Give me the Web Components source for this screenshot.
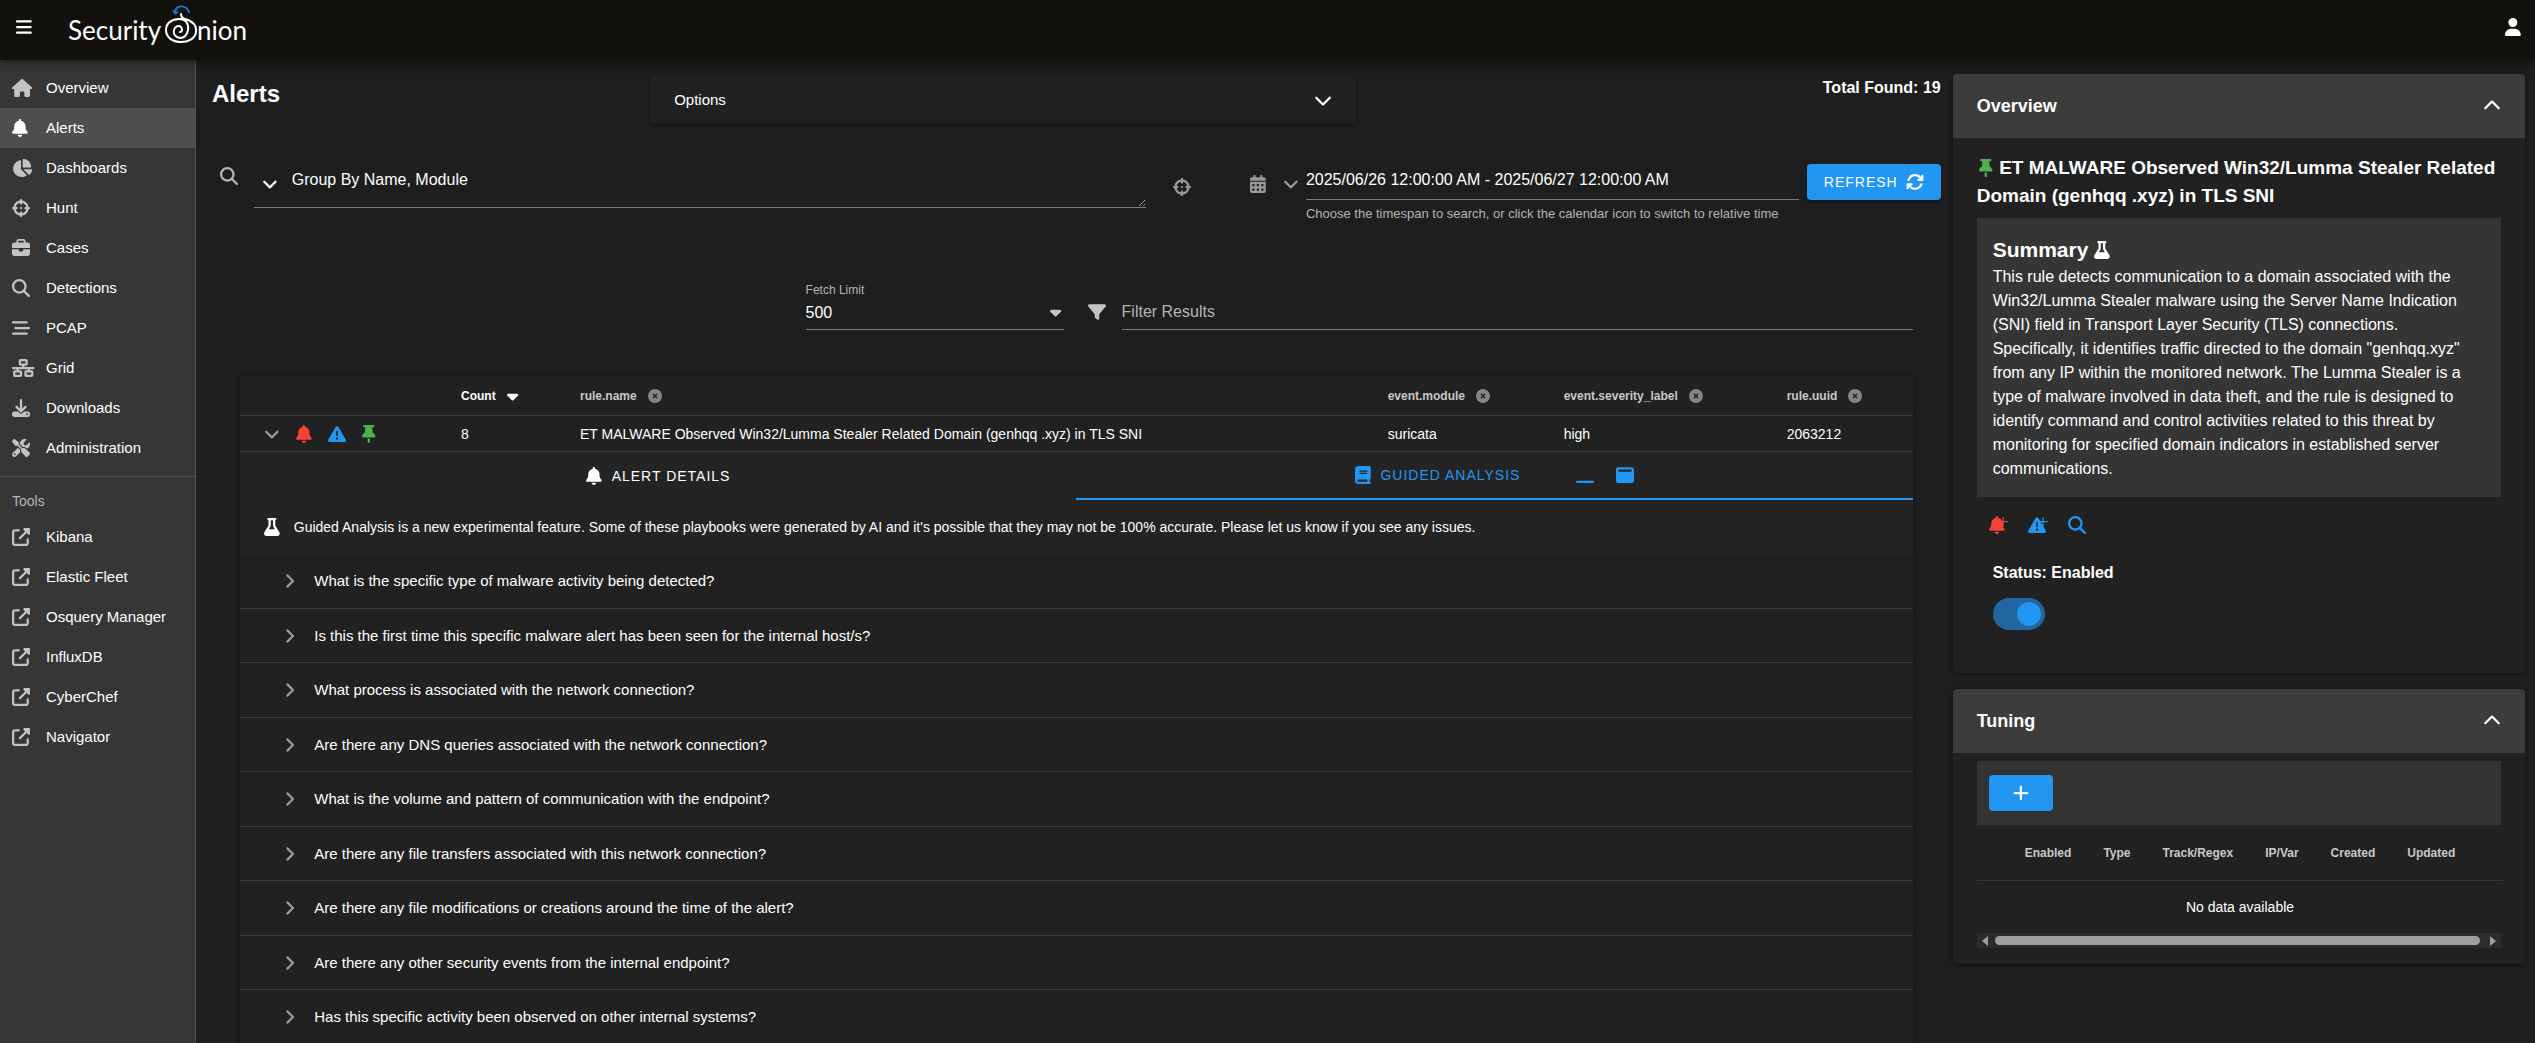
<!DOCTYPE html>
<html lang="en">
<head>
<meta charset="utf-8">
<title>Security Onion - Alerts</title>
<style>
  html, body {
    margin: 0;
    background: #1e1e1e;
  }

  body {
    font-family: "Liberation Sans", Arial, sans-serif;
    font-size: 14px;
    line-height: 20px;
    color: #fff;
    --primary: #2196f3;
    --surface: #212121;
    --raised: #353535;
    --muted: #b4b4b4;
    --rule: #7b7b7b;
    --divider: #3d3d3d;
  }
</style>
</head>
<body>
<so-app>
  <so-header slot="header"></so-header>

  <so-nav slot="nav">
    <so-nav-item icon="house">Overview</so-nav-item>
    <so-nav-item icon="bell" active>Alerts</so-nav-item>
    <so-nav-item icon="chart-pie">Dashboards</so-nav-item>
    <so-nav-item icon="crosshairs">Hunt</so-nav-item>
    <so-nav-item icon="briefcase">Cases</so-nav-item>
    <so-nav-item icon="search">Detections</so-nav-item>
    <so-nav-item icon="bars-staggered">PCAP</so-nav-item>
    <so-nav-item icon="network">Grid</so-nav-item>
    <so-nav-item icon="download">Downloads</so-nav-item>
    <so-nav-item icon="tools">Administration</so-nav-item>
    <so-nav-item slot="tools" icon="external">Kibana</so-nav-item>
    <so-nav-item slot="tools" icon="external">Elastic Fleet</so-nav-item>
    <so-nav-item slot="tools" icon="external">Osquery Manager</so-nav-item>
    <so-nav-item slot="tools" icon="external">InfluxDB</so-nav-item>
    <so-nav-item slot="tools" icon="external">CyberChef</so-nav-item>
    <so-nav-item slot="tools" icon="external">Navigator</so-nav-item>
  </so-nav>

  <so-title-bar total="19">Alerts</so-title-bar>
  <so-query-bar></so-query-bar>
  <so-filter-bar></so-filter-bar>
  <so-alert-card>
    <so-question>What is the specific type of malware activity being detected?</so-question>
    <so-question>Is this the first time this specific malware alert has been seen for the internal host/s?</so-question>
    <so-question>What process is associated with the network connection?</so-question>
    <so-question>Are there any DNS queries associated with the network connection?</so-question>
    <so-question>What is the volume and pattern of communication with the endpoint?</so-question>
    <so-question>Are there any file transfers associated with this network connection?</so-question>
    <so-question>Are there any file modifications or creations around the time of the alert?</so-question>
    <so-question>Are there any other security events from the internal endpoint?</so-question>
    <so-question>Has this specific activity been observed on other internal systems?</so-question>
  </so-alert-card>

  <so-panel slot="aside" heading="Overview"><so-overview></so-overview></so-panel>
  <so-panel slot="aside" heading="Tuning"><so-tuning></so-tuning></so-panel>
</so-app>

<script>
(() => {
  // name: [viewBox width, path], all 512 high
  const bell = 'M224 0c-17.7 0-32 14.3-32 32V51.2C119 66 64 130.6 64 208v18.8c0 47-17.3 92.4-48.5 127.6l-7.4 8.3c-8.4 9.4-10.4 22.9-5.3 34.4S19.4 416 32 416H416c12.6 0 24-7.4 29.2-18.9s3.1-25-5.3-34.4l-7.4-8.3C401.3 319.2 384 273.9 384 226.8V208c0-77.4-55-142-128-156.8V32c0-17.7-14.3-32-32-32zm45.3 493.3c12-12 18.7-28.3 18.7-45.3H224 160c0 17 6.7 33.3 18.7 45.3s28.3 18.7 45.3 18.7s33.3-6.7 45.3-18.7z'
  const triangle = 'M256 32c14.2 0 27.3 7.5 34.5 19.8l216 368c7.3 12.4 7.3 27.7 .2 40.1S486.3 480 472 480H40c-14.3 0-27.6-7.7-34.7-20.1s-7-27.8 .2-40.1l216-368C228.7 39.5 241.8 32 256 32zm0 128c-13.3 0-24 10.7-24 24V296c0 13.3 10.7 24 24 24s24-10.7 24-24V184c0-13.3-10.7-24-24-24zm32 224a32 32 0 1 0 -64 0 32 32 0 1 0 64 0z'

  const icons = {
    'bars': [448, 'M0 96C0 78.3 14.3 64 32 64H416c17.7 0 32 14.3 32 32s-14.3 32-32 32H32C14.3 128 0 113.7 0 96zM0 256c0-17.7 14.3-32 32-32H416c17.7 0 32 14.3 32 32s-14.3 32-32 32H32c-17.7 0-32-14.3-32-32zM448 416c0 17.7-14.3 32-32 32H32c-17.7 0-32-14.3-32-32s14.3-32 32-32H416c17.7 0 32 14.3 32 32z'],
    'user': [448, 'M224 256A128 128 0 1 0 224 0a128 128 0 1 0 0 256zm-45.7 48C79.8 304 0 383.8 0 482.3C0 498.7 13.3 512 29.7 512H418.3c16.4 0 29.7-13.3 29.7-29.7C448 383.8 368.2 304 269.7 304H178.3z'],
    'house': [576, 'M575.8 255.5c0 18-15 32.1-32 32.1h-32l.7 160.2c0 2.7-.2 5.4-.5 8.1V472c0 22.1-17.9 40-40 40H456c-1.1 0-2.2 0-3.3-.1c-1.4 .1-2.8 .1-4.2 .1H416 392c-22.1 0-40-17.9-40-40V448 384c0-17.7-14.3-32-32-32H256c-17.7 0-32 14.3-32 32v64 24c0 22.1-17.9 40-40 40H160 128.1c-1.5 0-3-.1-4.5-.2c-1.2 .1-2.4 .2-3.6 .2H104c-22.1 0-40-17.9-40-40V360c0-.9 0-1.9 .1-2.8V287.6H32c-18 0-32-14-32-32.1c0-9 3-17 10-24L266.4 8c7-7 15-8 22-8s15 2 21 7L564.8 231.5c8 7 12 15 11 24z'],
    'bell': [448, bell],
    'bell-plus': [448, bell + 'M384 30v114H270v32h114v114h32V176h114v-32H416V30z'],
    'chart-pie': [576, 'M304 240V16.6c0-9 7-16.6 16-16.6C443.7 0 544 100.3 544 224c0 9-7.6 16-16.6 16H304zM32 272C32 150.7 122.1 50.3 239 34.3c9.2-1.3 17 6.1 17 15.4V288L412.5 444.5c6.7 6.7 6.2 17.7-1.5 23.1C371.8 495.6 323.8 512 272 512C139.5 512 32 404.6 32 272zm526.4 16c9.3 0 16.6 7.8 15.4 17c-7.7 55.9-34.6 105.6-73.9 142.3c-6 5.6-15.4 5.2-21.2-.7L320 288H558.4z'],
    'crosshairs': [512, 'M256 0c17.7 0 32 14.3 32 32V42.4c93.7 13.9 167.7 88 181.6 181.6H480c17.7 0 32 14.3 32 32s-14.3 32-32 32H469.6c-13.9 93.7-88 167.7-181.6 181.6V480c0 17.7-14.3 32-32 32s-32-14.3-32-32V469.6C130.3 455.7 56.3 381.7 42.4 288H32c-17.7 0-32-14.3-32-32s14.3-32 32-32H42.4C56.3 130.3 130.3 56.3 224 42.4V32c0-17.7 14.3-32 32-32zM107.4 288c12.5 58.3 58.4 104.1 116.6 116.6V384c0-17.7 14.3-32 32-32s32 14.3 32 32v20.6c58.3-12.5 104.1-58.4 116.6-116.6H384c-17.7 0-32-14.3-32-32s14.3-32 32-32h20.6C392.1 165.7 346.3 119.9 288 107.4V128c0 17.7-14.3 32-32 32s-32-14.3-32-32V107.4C165.7 119.9 119.9 165.7 107.4 224H128c17.7 0 32 14.3 32 32s-14.3 32-32 32H107.4zM256 224a32 32 0 1 1 0 64 32 32 0 1 1 0-64z'],
    'briefcase': [512, 'M184 48H328c4.4 0 8 3.6 8 8V96H176V56c0-4.4 3.6-8 8-8zm-56 8V96H64C28.7 96 0 124.7 0 160v96H192 320 512V160c0-35.3-28.7-64-64-64H384V56c0-30.9-25.1-56-56-56H184c-30.9 0-56 25.1-56 56zM512 288H320v32c0 17.7-14.3 32-32 32H224c-17.7 0-32-14.3-32-32V288H0V416c0 35.3 28.7 64 64 64H448c35.3 0 64-28.7 64-64V288z'],
    'search': [512, 'M416 208c0 45.9-14.9 88.3-40 122.7L502.6 457.4c12.5 12.5 12.5 32.8 0 45.3s-32.8 12.5-45.3 0L330.7 376c-34.4 25.2-76.8 40-122.7 40C93.1 416 0 322.9 0 208S93.1 0 208 0S416 93.1 416 208zM208 352a144 144 0 1 0 0-288 144 144 0 1 0 0 288z'],
    'bars-staggered': [512, 'M0 96C0 78.3 14.3 64 32 64H416c17.7 0 32 14.3 32 32s-14.3 32-32 32H32C14.3 128 0 113.7 0 96zM64 256c0-17.7 14.3-32 32-32H480c17.7 0 32 14.3 32 32s-14.3 32-32 32H96c-17.7 0-32-14.3-32-32zM448 416c0 17.7-14.3 32-32 32H32c-17.7 0-32-14.3-32-32s14.3-32 32-32H416c17.7 0 32 14.3 32 32z'],
    'network': [640, 'M256 64H384v64H256V64zM240 0c-26.5 0-48 21.5-48 48v96c0 26.5 21.5 48 48 48h48v32H32c-17.7 0-32 14.3-32 32s14.3 32 32 32h96v32H80c-26.5 0-48 21.5-48 48v96c0 26.5 21.5 48 48 48H240c26.5 0 48-21.5 48-48V368c0-26.5-21.5-48-48-48H192V288H448v32H400c-26.5 0-48 21.5-48 48v96c0 26.5 21.5 48 48 48H560c26.5 0 48-21.5 48-48V368c0-26.5-21.5-48-48-48H512V288h96c17.7 0 32-14.3 32-32s-14.3-32-32-32H352V192h48c26.5 0 48-21.5 48-48V48c0-26.5-21.5-48-48-48H240zM96 448V384H224v64H96zm320-64H544v64H416V384z'],
    'download': [512, 'M288 32c0-17.7-14.3-32-32-32s-32 14.3-32 32V274.7l-73.4-73.4c-12.5-12.5-32.8-12.5-45.3 0s-12.5 32.8 0 45.3l128 128c12.5 12.5 32.8 12.5 45.3 0l128-128c12.5-12.5 12.5-32.8 0-45.3s-32.8-12.5-45.3 0L288 274.7V32zM64 352c-35.3 0-64 28.7-64 64v32c0 35.3 28.7 64 64 64H448c35.3 0 64-28.7 64-64V416c0-35.3-28.7-64-64-64H346.5l-45.3 45.3c-25 25-65.5 25-90.5 0L165.5 352H64zm368 56a24 24 0 1 1 0 48 24 24 0 1 1 0-48z'],
    'tools': [512, 'M78.6 5C69.1-2.4 55.6-1.5 47 7L7 47c-8.5 8.5-9.4 22-2.1 31.6l80 104c4.5 5.9 11.6 9.4 19 9.4h54.1l109 109c-14.7 29-10 65.4 14.3 89.6l112 112c12.5 12.5 32.8 12.5 45.3 0l64-64c12.5-12.5 12.5-32.8 0-45.3l-112-112c-24.2-24.2-60.6-29-89.6-14.3l-109-109V104c0-7.5-3.5-14.5-9.4-19L78.6 5zM19.9 396.1C7.2 408.8 0 426.1 0 444.1C0 481.6 30.4 512 67.9 512c18 0 35.3-7.2 48-19.9L233.7 374.3c-7.8-20.9-9-43.6-3.6-65.1l-61.7-61.7L19.9 396.1zM512 144c0-10.5-1.1-20.7-3.2-30.5c-2.4-11.2-16.1-14.1-24.2-6l-63.9 63.9c-3 3-7.1 4.7-11.3 4.7H352c-8.8 0-16-7.2-16-16V102.6c0-4.2 1.7-8.3 4.7-11.3l63.9-63.9c8.1-8.1 5.2-21.8-6-24.2C388.7 1.1 378.5 0 368 0C288.5 0 224 64.5 224 144l0 .8 85.3 85.3c36-9.1 75.8 .5 104 28.7L429 274.5c49-23 83-72.8 83-130.5zM56 432a24 24 0 1 1 48 0 24 24 0 1 1 -48 0z'],
    'external': [512, 'M352 0c-12.9 0-24.6 7.8-29.6 19.8s-2.2 25.7 6.9 34.9L370.7 96 201.4 265.4c-12.5 12.5-12.5 32.8 0 45.3s32.8 12.5 45.3 0L416 141.3l41.4 41.4c9.2 9.2 22.9 11.9 34.9 6.9s19.8-16.6 19.8-29.6V32c0-17.7-14.3-32-32-32H352zM80 32C35.8 32 0 67.8 0 112V432c0 44.2 35.8 80 80 80H400c44.2 0 80-35.8 80-80V320c0-17.7-14.3-32-32-32s-32 14.3-32 32V432c0 8.8-7.2 16-16 16H80c-8.8 0-16-7.2-16-16V112c0-8.8 7.2-16 16-16H192c17.7 0 32-14.3 32-32s-14.3-32-32-32H80z'],
    'calendar': [448, 'M128 0c17.7 0 32 14.3 32 32V64H288V32c0-17.7 14.3-32 32-32s32 14.3 32 32V64h48c26.5 0 48 21.5 48 48v48H0V112C0 85.5 21.5 64 48 64H96V32c0-17.7 14.3-32 32-32zM0 192H448V464c0 26.5-21.5 48-48 48H48c-26.5 0-48-21.5-48-48V192zm64 80v32c0 8.8 7.2 16 16 16h32c8.8 0 16-7.2 16-16V272c0-8.8-7.2-16-16-16H80c-8.8 0-16 7.2-16 16zm128 0v32c0 8.8 7.2 16 16 16h32c8.8 0 16-7.2 16-16V272c0-8.8-7.2-16-16-16H208c-8.8 0-16 7.2-16 16zm144-16c-8.8 0-16 7.2-16 16v32c0 8.8 7.2 16 16 16h32c8.8 0 16-7.2 16-16V272c0-8.8-7.2-16-16-16H336zM64 400v32c0 8.8 7.2 16 16 16h32c8.8 0 16-7.2 16-16V400c0-8.8-7.2-16-16-16H80c-8.8 0-16 7.2-16 16zm144-16c-8.8 0-16 7.2-16 16v32c0 8.8 7.2 16 16 16h32c8.8 0 16-7.2 16-16V400c0-8.8-7.2-16-16-16H208zm112 16v32c0 8.8 7.2 16 16 16h32c8.8 0 16-7.2 16-16V400c0-8.8-7.2-16-16-16H336c-8.8 0-16 7.2-16 16z'],
    'chevron-down': [512, 'M233.4 406.6c12.5 12.5 32.8 12.5 45.3 0l192-192c12.5-12.5 12.5-32.8 0-45.3s-32.8-12.5-45.3 0L256 338.7 86.6 169.4c-12.5-12.5-32.8-12.5-45.3 0s-12.5 32.8 0 45.3l192 192z'],
    'chevron-up': [512, 'M233.4 105.4c12.5-12.5 32.8-12.5 45.3 0l192 192c12.5 12.5 12.5 32.8 0 45.3s-32.8 12.5-45.3 0L256 173.3 86.6 342.6c-12.5 12.5-32.8 12.5-45.3 0s-12.5-32.8 0-45.3l192-192z'],
    'angle-down': [448, 'M201.4 374.6c12.5 12.5 32.8 12.5 45.3 0l160-160c12.5-12.5 12.5-32.8 0-45.3s-32.8-12.5-45.3 0L224 306.7 86.6 169.4c-12.5-12.5-32.8-12.5-45.3 0s-12.5 32.8 0 45.3l160 160z'],
    'angle-right': [320, 'M278.6 233.4c12.5 12.5 12.5 32.8 0 45.3l-160 160c-12.5 12.5-32.8 12.5-45.3 0s-12.5-32.8 0-45.3L210.7 256 73.4 118.6c-12.5-12.5-12.5-32.8 0-45.3s32.8-12.5 45.3 0l160 160z'],
    'caret-down': [320, 'M137.4 374.6c12.5 12.5 32.8 12.5 45.3 0l128-128c9.2-9.2 11.9-22.9 6.9-34.9s-16.6-19.8-29.6-19.8L32 192c-12.9 0-24.6 7.8-29.6 19.8s-2.2 25.7 6.9 34.9l128 128z'],
    'filter': [512, 'M3.9 54.9C10.5 40.9 24.5 32 40 32H472c15.5 0 29.5 8.9 36.1 22.9s4.6 30.5-5.2 42.5L320 320.9V448c0 12.1-6.8 23.2-17.7 28.6s-23.8 4.3-33.5-3l-64-48c-8.1-6-12.8-15.5-12.8-25.6V320.9L9 97.3C-.7 85.4-2.8 68.8 3.9 54.9z'],
    'refresh': [512, 'M105.1 202.6c7.7-21.8 20.2-42.3 37.8-59.8c62.5-62.5 163.8-62.5 226.3 0L386.3 160H352c-17.7 0-32 14.3-32 32s14.3 32 32 32H463.5h.4c17.7 0 32-14.3 32-32V80c0-17.7-14.3-32-32-32s-32 14.3-32 32v35.2L414.4 97.6c-87.5-87.5-229.3-87.5-316.8 0C73.2 122 55.6 150.7 44.8 181.4c-5.9 16.7 2.9 34.9 19.5 40.8s34.9-2.9 40.8-19.5zM39 289.3c-5 1.5-9.8 4.2-13.7 8.2c-4 4-6.7 8.8-8.1 14c-.3 1.2-.6 2.5-.8 3.8c-.3 1.7-.4 3.4-.4 5.1V432c0 17.7 14.3 32 32 32s32-14.3 32-32V396.9l17.6 17.5c87.5 87.4 229.3 87.4 316.7 0c24.4-24.4 42.1-53.1 52.9-83.7c5.9-16.7-2.9-34.9-19.5-40.8s-34.9 2.9-40.8 19.5c-7.7 21.8-20.2 42.3-37.8 59.8c-62.5 62.5-163.8 62.5-226.3 0l-.1-.1L125.6 352H160c17.7 0 32-14.3 32-32s-14.3-32-32-32H48.4c-1.6 0-3.2 .1-4.8 .3s-3.1 .5-4.6 1z'],
    'warning': [512, triangle],
    'warning-plus': [512, triangle + 'M414 30h32v114h114v32H446v114h-32V176H300v-32h114z'],
    'thumbtack': [384, 'M32 32C32 14.3 46.3 0 64 0H320c17.7 0 32 14.3 32 32s-14.3 32-32 32H290.5l11.4 148.2c36.7 19.9 65.7 53.2 79.5 94.7l1 3c3.3 9.8 1.6 20.5-4.4 28.8s-15.7 13.3-26 13.3H32c-10.3 0-19.9-4.9-26-13.3s-7.7-19.1-4.4-28.8l1-3c13.8-41.5 42.8-74.8 79.5-94.7L93.5 64H64C46.3 64 32 49.7 32 32zM160 384h64v96c0 17.7-14.3 32-32 32s-32-14.3-32-32V384z'],
    'flask': [448, 'M288 0H160 128C110.3 0 96 14.3 96 32s14.3 32 32 32V196.8c0 11.8-3.3 23.5-9.5 33.5L10.3 406.2C3.6 417.2 0 429.7 0 442.6C0 480.9 31.1 512 69.4 512H378.6c38.3 0 69.4-31.1 69.4-69.4c0-12.8-3.6-25.4-10.3-36.4L329.5 230.4c-6.2-10.1-9.5-21.7-9.5-33.5V64c17.7 0 32-14.3 32-32s-14.3-32-32-32H288zM192 196.8V64h64V196.8c0 23.7 6.6 46.9 19 67.1L309.5 320h-171L173 263.9c12.4-20.2 19-43.4 19-67.1z'],
    'book': [448, 'M96 0C43 0 0 43 0 96V416c0 53 43 96 96 96H384h32c17.7 0 32-14.3 32-32s-14.3-32-32-32V384c17.7 0 32-14.3 32-32V32c0-17.7-14.3-32-32-32H384 96zm0 384H352v64H96c-17.7 0-32-14.3-32-32s14.3-32 32-32zm32-240c0-8.8 7.2-16 16-16H336c8.8 0 16 7.2 16 16s-7.2 16-16 16H144c-8.8 0-16-7.2-16-16zm16 48H336c8.8 0 16 7.2 16 16s-7.2 16-16 16H144c-8.8 0-16-7.2-16-16s7.2-16 16-16z'],
    'minimize': [512, 'M32 416c-17.7 0-32 14.3-32 32s14.3 32 32 32H480c17.7 0 32-14.3 32-32s-14.3-32-32-32H32z'],
    'maximize': [512, 'M64 32C28.7 32 0 60.7 0 96V416c0 35.3 28.7 64 64 64H448c35.3 0 64-28.7 64-64V96c0-35.3-28.7-64-64-64H64zM96 96H416c17.7 0 32 14.3 32 32s-14.3 32-32 32H96c-17.7 0-32-14.3-32-32s14.3-32 32-32z'],
    'circle-xmark': [512, 'M256 512A256 256 0 1 0 256 0a256 256 0 1 0 0 512zM175 175c9.4-9.4 24.6-9.4 33.9 0l47 47 47-47c9.4-9.4 24.6-9.4 33.9 0s9.4 24.6 0 33.9l-47 47 47 47c9.4 9.4 9.4 24.6 0 33.9s-24.6 9.4-33.9 0l-47-47-47 47c-9.4 9.4-24.6 9.4-33.9 0s-9.4-24.6 0-33.9l47-47-47-47c-9.4-9.4-9.4-24.6 0-33.9z'],
    'plus': [448, 'M256 80c0-17.7-14.3-32-32-32s-32 14.3-32 32V224H48c-17.7 0-32 14.3-32 32s14.3 32 32 32H192V432c0 17.7 14.3 32 32 32s32-14.3 32-32V288H400c17.7 0 32-14.3 32-32s-14.3-32-32-32H256V80z']
  }

  const reset = `
    :host, * { box-sizing: border-box; }
    button, input, select, textarea {
      margin: 0;
      padding: 0;
      border: 0;
      border-radius: 0;
      outline: 0;
      background: none;
      font: inherit;
      color: inherit;
    }
    button { cursor: pointer; }
  `

  function define(name, html, connected) {
    const template = document.createElement('template')
    template.innerHTML = `<style>${reset}</style>${html}`

    customElements.define(name, class extends HTMLElement {
      constructor() {
        super()
        this.attachShadow({ mode: 'open' })
        this.shadowRoot.appendChild(template.content.cloneNode(true))
      }

      connectedCallback() {
        if (connected) connected(this, this.shadowRoot)
      }
    })
  }

  define('so-icon', `
    <style>
      :host { display: inline-flex; flex: none; font-size: 18px; }
      svg { display: block; height: 1em; fill: currentColor; overflow: visible; }
    </style>
    <svg aria-hidden="true"><path></path></svg>
  `, (host, root) => {
    const [width, path] = icons[host.getAttribute('name')]
    root.querySelector('svg').setAttribute('viewBox', `0 0 ${width} 512`)
    root.querySelector('path').setAttribute('d', path)
  })

  define('so-app', `
    <style>
      :host { display: flex; flex-direction: column; min-height: 100vh; }
      .body { display: flex; flex: 1; }
      .content {
        flex: 1;
        min-width: 0;
        display: grid;
        grid-template-columns: minmax(0, 49fr) minmax(0, 16fr);
        padding: 0 10px 0 4px;
      }
      main { padding-top: 16px; }
      aside { display: flex; flex-direction: column; gap: 16px; padding-top: 14px; }
    </style>
    <slot name="header"></slot>
    <div class="body">
      <slot name="nav"></slot>
      <div class="content">
        <main><slot></slot></main>
        <aside><slot name="aside"></slot></aside>
      </div>
    </div>
  `)

  define('so-header', `
    <style>
      :host { display: block; position: relative; z-index: 1; }
      header {
        display: flex;
        align-items: center;
        height: 60px;
        padding: 0 14px 6px 16px;
        background: #12110d;
        box-shadow: 0 2px 4px rgba(0, 0, 0, .2), 0 4px 10px rgba(0, 0, 0, .3);
      }
      button { display: flex; }
      .logo { display: block; margin: 0 auto 0 36px; }
    </style>
    <header>
      <button aria-label="Menu"><so-icon name="bars"></so-icon></button>
      <a class="logo" href="#" aria-label="Security Onion home">
        <svg width="182" height="44" viewBox="0 0 182 44" fill="none" stroke-linecap="round">
          <g fill="#fff" font-family="Lato, 'Noto Sans', sans-serif" font-size="26">
            <text x="0" y="37">Security</text>
            <text x="129" y="37">nion</text>
          </g>
          <path stroke="#fff" stroke-width="2" d="M113 11c0 3 1 4 4 5C124 18 129 22 128 29C127 36 120 39 113 39C104 39 98 34 98 27C98 20 104 16 111 16C118 16 121 21 120 27C119 32 116 35 112 35C107 34 105 31 106 27C107 23 111 22 113 24C115 27 114 29 112 29"/>
          <path stroke="#1b74cc" stroke-width="2" d="M121 9C118 2 109 1 107 9"/>
          <path fill="#1b74cc" d="M104 7l7 2-4 3z"/>
        </svg>
      </a>
      <button aria-label="User"><so-icon name="user"></so-icon></button>
    </header>
  `)

  define('so-nav', `
    <style>
      :host { display: block; flex: none; width: 196px; background: #363636; border-right: 1px solid #545454; }
      nav { padding: 8px 0; }
      hr { margin: 0; border: 0; border-top: 1px solid #545454; }
      h2 { margin: 0; padding: 0 12px; font-size: 14px; font-weight: normal; line-height: 32px; color: var(--muted); }
    </style>
    <nav><slot></slot></nav>
    <hr>
    <nav><h2>Tools</h2><slot name="tools"></slot></nav>
  `)

  define('so-nav-item', `
    <style>
      :host { display: block; }
      a {
        display: grid;
        grid-template-columns: 34px 1fr;
        align-items: center;
        height: 40px;
        padding-left: 12px;
        font-size: 15px;
        color: #fff;
        text-decoration: none;
      }
      so-icon { color: #c3c3c3; }
      :host([active]) a { background: #4e4e4e; }
      :host([active]) so-icon { color: #fff; }
    </style>
    <a href="#"><span class="icon"></span><slot></slot></a>
  `, (host, root) => {
    root.querySelector('.icon').outerHTML = `<so-icon name="${host.getAttribute('icon')}"></so-icon>`
  })

  define('so-title-bar', `
    <style>
      :host { display: grid; grid-template-columns: 3fr 5fr 4fr; }
      h1, button, .total { margin: 0 12px; }
      h1 { font-size: 24px; line-height: 36px; }
      button {
        display: flex;
        align-items: center;
        justify-content: space-between;
        height: 48px;
        padding: 0 24px;
        border-radius: 4px;
        background: var(--surface);
        box-shadow: 0 1px 3px rgba(0, 0, 0, .4);
        font-size: 15px;
      }
      .total { font-size: 16px; font-weight: bold; line-height: 24px; text-align: right; }
    </style>
    <h1><slot></slot></h1>
    <button aria-expanded="false">Options <so-icon name="chevron-down"></so-icon></button>
    <div class="total"></div>
  `, (host, root) => {
    root.querySelector('.total').textContent = `Total Found: ${host.getAttribute('total')}`
  })

  define('so-query-bar', `
    <style>
      :host { display: grid; grid-template-columns: 7fr 5fr; margin-top: 40px; font-size: 16px; line-height: 24px; }
      .query, .time { display: flex; align-items: flex-start; }
      .query { padding: 0 31px 0 20px; }
      .time { padding: 0 12px 0 28px; }
      button { display: flex; align-items: center; height: 32px; color: #999; }
      .search { margin: 0 16px 0 0; height: 24px; color: var(--muted); }
      .field { flex: 1; min-width: 0; display: flex; margin-top: 4px; border-bottom: 1px solid var(--rule); }
      .field button { padding: 0 14px 0 8px; color: #fff; }
      textarea { flex: 1; display: block; height: 39px; resize: vertical; }
      .hunt { margin: 7px 0 0 27px; }
      .time > button { margin-top: 4px; }
      .time > .relative { margin-right: 17px; }
      .range { flex: 1; min-width: 0; margin-left: 7px; padding-top: 4px; }
      input { display: block; width: 100%; height: 32px; padding-bottom: 8px; border-bottom: 1px solid var(--rule); }
      .hint { margin-top: 4px; font-size: 13px; line-height: 20px; color: var(--muted); }
      .time > .refresh {
        height: 36px;
        margin: 0 0 0 8px;
        padding: 0 17px;
        gap: 8px;
        border-radius: 4px;
        background: var(--primary);
        box-shadow: 0 2px 3px rgba(0, 0, 0, .4);
        font-size: 14px;
        letter-spacing: 1px;
        color: #fff;
      }
    </style>
    <div class="query">
      <button class="search" aria-label="Search"><so-icon name="search"></so-icon></button>
      <div class="field">
        <button aria-label="Saved queries"><so-icon name="angle-down"></so-icon></button>
        <textarea aria-label="Query">Group By Name, Module</textarea>
      </div>
      <button class="hunt" aria-label="Hunt"><so-icon name="crosshairs"></so-icon></button>
    </div>
    <div class="time">
      <button class="relative" aria-label="Relative time"><so-icon name="calendar"></so-icon></button>
      <button aria-label="Time options"><so-icon name="angle-down"></so-icon></button>
      <div class="range">
        <input aria-label="Timespan" value="2025/06/26 12:00:00 AM - 2025/06/27 12:00:00 AM">
        <div class="hint">Choose the timespan to search, or click the calendar icon to switch to relative time</div>
      </div>
      <button class="refresh">REFRESH <so-icon name="refresh"></so-icon></button>
    </div>
  `)

  define('so-filter-bar', `
    <style>
      :host { display: grid; grid-template-columns: 4fr 8fr; margin: 56px 40px 46px; font-size: 16px; }
      .controls { grid-column: 2; display: flex; align-items: flex-end; padding-left: 8px; }
      .limit { flex: none; width: 258px; }
      label { display: block; font-size: 12px; line-height: 20px; color: var(--muted); }
      .select { display: flex; align-items: center; height: 30px; border-bottom: 1px solid var(--rule); color: #fff; }
      select { flex: 1; height: 24px; margin-bottom: 4px; appearance: none; }
      option { background: var(--raised); }
      .select so-icon, .filter-icon { color: #c3c3c3; }
      .select so-icon { margin: 0 2px 6px 0; }
      .filter-icon { margin: 0 16px 9px 24px; }
      input { flex: 1; min-width: 0; height: 30px; padding-bottom: 6px; border-bottom: 1px solid var(--rule); }
      input::placeholder { color: var(--muted); opacity: 1; }
    </style>
    <div class="controls">
      <div class="limit">
        <label for="limit">Fetch Limit</label>
        <div class="select">
          <select id="limit"><option>500</option></select>
          <so-icon name="caret-down"></so-icon>
        </div>
      </div>
      <so-icon class="filter-icon" name="filter"></so-icon>
      <input aria-label="Filter Results" placeholder="Filter Results">
    </div>
  `)

  define('so-alert-card', `
    <style>
      :host {
        display: block;
        margin: 0 40px;
        background: var(--surface);
        box-shadow: 0 1px 4px rgba(0, 0, 0, .4);
      }
      table { width: 100%; border-collapse: separate; border-spacing: 0; table-layout: fixed; }
      th, td { padding: 0 16px; border-bottom: 1px solid var(--divider); text-align: left; }
      th { height: 40px; font-size: 12px; color: #c8c8c8; }
      td { height: 36px; }
      .expand { width: 205px; }
      .count { width: 119px; color: #fff; }
      .module { width: 176px; }
      .severity { width: 223px; }
      .uuid { width: 142px; }
      .label { display: flex; align-items: center; gap: 11px; }
      .label button { display: flex; color: #858585; }
      .label button so-icon { font-size: 14px; }
      .actions { display: flex; gap: 16px; padding-left: 8px; }
      .actions button { display: flex; }
      .chevron { color: #999; }
      .red { color: #f44336; }
      .blue { color: var(--primary); }
      .green { color: #4caf50; }
      .tabs { display: grid; grid-template-columns: 1fr 1fr; }
      .tab { display: flex; align-items: center; justify-content: center; height: 48px; }
      .tab button { display: flex; align-items: center; gap: 10px; letter-spacing: 1px; }
      .tab.selected { border-bottom: 2px solid var(--primary); color: var(--primary); }
      .tab .minimize { margin: 0 22px 0 56px; }
      .expanded { background: #242424; }
      .notice { display: flex; align-items: center; gap: 14px; height: 54px; margin: 0; padding: 0 24px; }
    </style>
    <table>
      <thead>
        <tr>
          <th class="expand"></th>
          <th class="count"><span class="label">Count <so-icon name="caret-down"></so-icon></span></th>
          <th><span class="label">rule.name <button aria-label="Remove rule.name"><so-icon name="circle-xmark"></so-icon></button></span></th>
          <th class="module"><span class="label">event.module <button aria-label="Remove event.module"><so-icon name="circle-xmark"></so-icon></button></span></th>
          <th class="severity"><span class="label">event.severity_label <button aria-label="Remove event.severity_label"><so-icon name="circle-xmark"></so-icon></button></span></th>
          <th class="uuid"><span class="label">rule.uuid <button aria-label="Remove rule.uuid"><so-icon name="circle-xmark"></so-icon></button></span></th>
        </tr>
      </thead>
      <tbody>
        <tr>
          <td>
            <div class="actions">
              <button class="chevron" aria-label="Collapse"><so-icon name="angle-down"></so-icon></button>
              <button class="red" aria-label="Acknowledge"><so-icon name="bell"></so-icon></button>
              <button class="blue" aria-label="Escalate"><so-icon name="warning"></so-icon></button>
              <button class="green" aria-label="Tune detection"><so-icon name="thumbtack"></so-icon></button>
            </div>
          </td>
          <td>8</td>
          <td>ET MALWARE Observed Win32/Lumma Stealer Related Domain (genhqq .xyz) in TLS SNI</td>
          <td>suricata</td>
          <td>high</td>
          <td>2063212</td>
        </tr>
      </tbody>
    </table>
    <div class="expanded">
      <div class="tabs">
        <div class="tab"><button><so-icon name="bell"></so-icon>ALERT DETAILS</button></div>
        <div class="tab selected">
          <button><so-icon name="book"></so-icon>GUIDED ANALYSIS</button>
          <button class="minimize" aria-label="Collapse all"><so-icon name="minimize"></so-icon></button>
          <button aria-label="Expand all"><so-icon name="maximize"></so-icon></button>
        </div>
      </div>
      <p class="notice"><so-icon name="flask"></so-icon>Guided Analysis is a new experimental feature. Some of these playbooks were generated by AI and it's possible that they may not be 100% accurate. Please let us know if you see any issues.</p>
    </div>
    <slot></slot>
  `)

  define('so-question', `
    <style>
      :host { display: block; height: 55px; border-bottom: 1px solid var(--divider); font-size: 15px; }
      :host(:nth-child(even)) { height: 54px; }
      :host(:last-child) { height: 53px; border-bottom: 0; }
      button { display: flex; align-items: center; gap: 19px; width: 100%; height: 100%; padding: 0 44px; text-align: left; }
      so-icon { color: #999; }
    </style>
    <button aria-expanded="false"><so-icon name="angle-right"></so-icon><slot></slot></button>
  `)

  define('so-panel', `
    <style>
      :host {
        display: block;
        border-radius: 4px;
        background: var(--surface);
        box-shadow: 0 1px 4px rgba(0, 0, 0, .4);
      }
      button {
        display: flex;
        align-items: center;
        justify-content: space-between;
        width: 100%;
        height: 64px;
        padding: 0 24px;
        border-radius: 4px 4px 0 0;
        background: #3c3c3c;
        font-size: 18px;
        font-weight: bold;
      }
    </style>
    <button aria-expanded="true"><span></span><so-icon name="chevron-up"></so-icon></button>
    <slot></slot>
  `, (host, root) => {
    root.querySelector('span').textContent = host.getAttribute('heading')
  })

  define('so-overview', `
    <style>
      :host { display: block; padding: 16px 24px 43px; font-size: 16px; line-height: 24px; }
      h2 { margin: 0 0 8px; font-size: 19px; line-height: 28px; }
      h2 so-icon { margin: 0 7px 0 2px; vertical-align: -3px; color: #4caf50; }
      .summary { padding: 16px; background: var(--raised); }
      h3 { display: flex; align-items: center; gap: 6px; margin: 0; font-size: 21px; line-height: 31px; }
      p { margin: 0; }
      .actions { display: flex; margin: 8px 0 16px; color: var(--primary); }
      .actions button { display: flex; align-items: center; justify-content: center; width: 40px; height: 40px; }
      .actions .red { color: #f44336; }
      .status { padding: 0 16px; }
      label { display: block; font-weight: bold; }
      input {
        appearance: none;
        display: flex;
        width: 52px;
        height: 32px;
        margin-top: 13px;
        padding: 4px;
        border-radius: 16px;
        background: #2166a0;
      }
      input::before { content: ""; width: 24px; height: 24px; border-radius: 12px; background: var(--primary); }
      input:checked { justify-content: flex-end; }
    </style>
    <h2><so-icon name="thumbtack"></so-icon>ET MALWARE Observed Win32/Lumma Stealer Related Domain (genhqq .xyz) in TLS SNI</h2>
    <div class="summary">
      <h3>Summary <so-icon name="flask"></so-icon></h3>
      <p>This rule detects communication to a domain associated with the Win32/Lumma Stealer malware using the Server Name Indication (SNI) field in Transport Layer Security (TLS) connections. Specifically, it identifies traffic directed to the domain "genhqq.xyz" from any IP within the monitored network. The Lumma Stealer is a type of malware involved in data theft, and the rule is designed to identify command and control activities related to this threat by monitoring for specified domain indicators in established server communications.</p>
    </div>
    <div class="actions">
      <button class="red" aria-label="Acknowledge all"><so-icon name="bell-plus"></so-icon></button>
      <button aria-label="Escalate all"><so-icon name="warning-plus"></so-icon></button>
      <button aria-label="Hunt"><so-icon name="search"></so-icon></button>
    </div>
    <div class="status">
      <label for="enabled">Status: Enabled</label>
      <input id="enabled" type="checkbox" role="switch" checked>
    </div>
  `)

  define('so-tuning', `
    <style>
      :host { display: block; padding: 8px 24px 16px; }
      .toolbar { display: flex; align-items: center; height: 64px; padding: 0 12px; background: #333; }
      .add {
        display: flex;
        align-items: center;
        justify-content: center;
        width: 64px;
        height: 36px;
        border-radius: 4px;
        background: var(--primary);
      }
      table { width: 100%; border-collapse: separate; border-spacing: 0; }
      th { height: 56px; padding: 0 16px; border-bottom: 1px solid #363636; font-size: 12px; color: #c8c8c8; }
      td { height: 52px; padding: 0; text-align: center; }
      .scroll { display: flex; align-items: center; gap: 6px; height: 15px; padding: 0 5px; background: #2c2c2c; }
      .thumb { flex: 1; height: 9px; margin: 0 4px 0 1px; border-radius: 5px; background: #9f9f9f; }
      .scroll svg { display: block; fill: #9f9f9f; }
    </style>
    <div class="toolbar"><button class="add" aria-label="Add tuning"><so-icon name="plus"></so-icon></button></div>
    <table>
      <thead>
        <tr><th></th><th>Enabled</th><th>Type</th><th>Track/Regex</th><th>IP/Var</th><th>Created</th><th>Updated</th><th></th></tr>
      </thead>
      <tbody>
        <tr><td colspan="8">No data available</td></tr>
      </tbody>
    </table>
    <div class="scroll">
      <svg width="6" height="10" viewBox="0 0 6 10"><path d="M6 0v10L0 5z"/></svg>
      <div class="thumb"></div>
      <svg width="6" height="10" viewBox="0 0 6 10"><path d="M0 0v10l6-5z"/></svg>
    </div>
  `)
})()
</script>
</body>
</html>
